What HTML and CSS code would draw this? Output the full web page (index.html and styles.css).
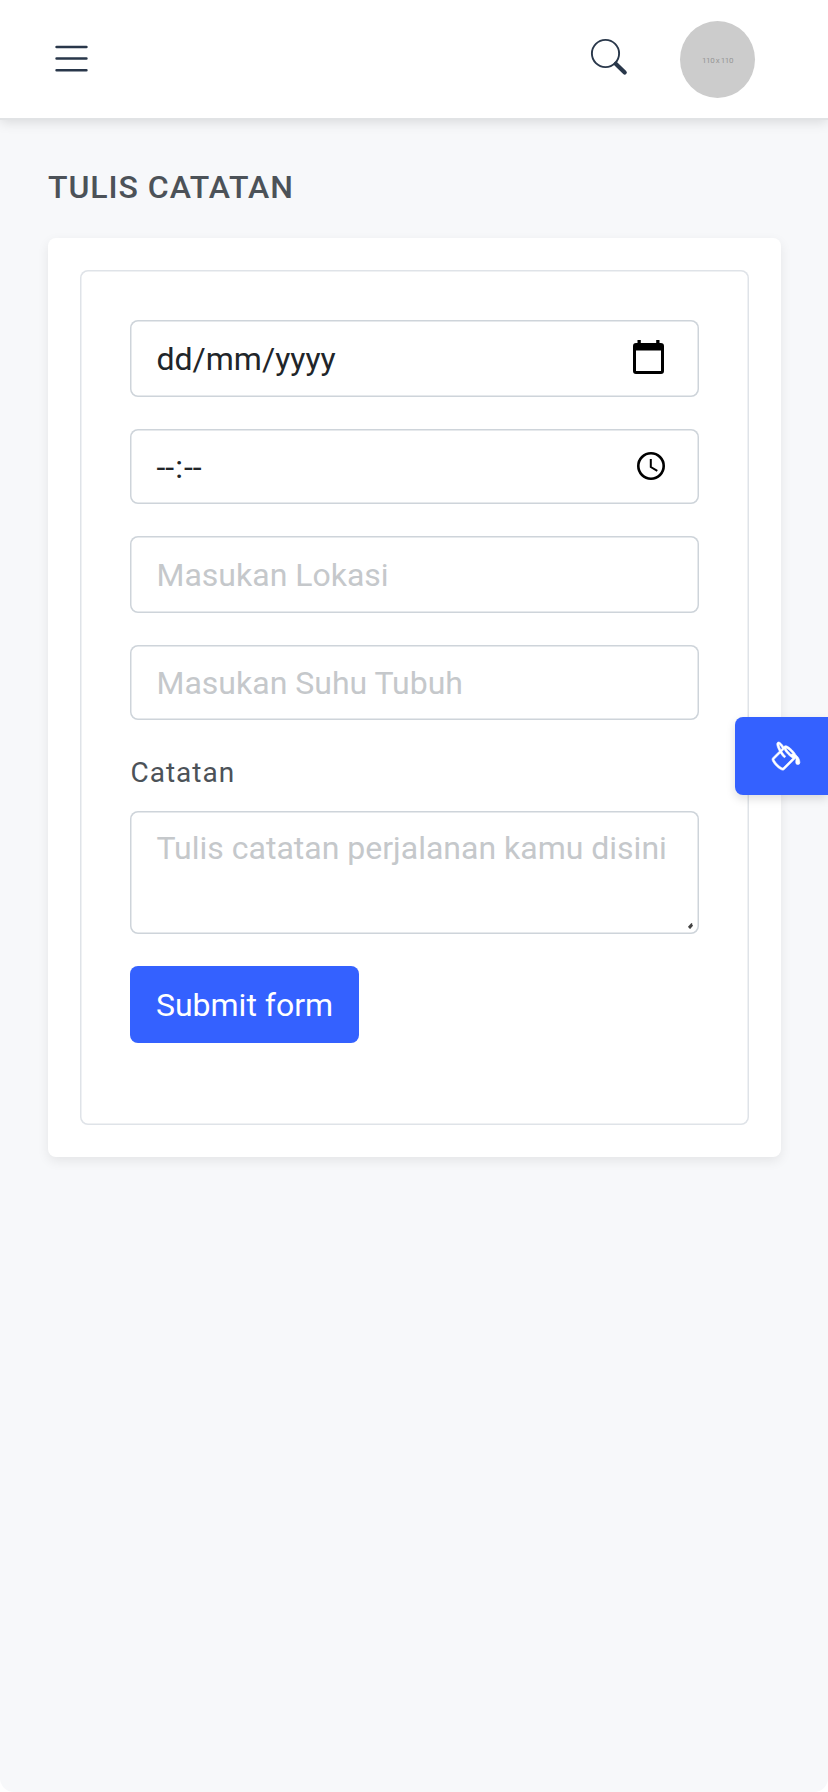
FILE: index.html
```html
<!DOCTYPE html>
<html lang="id">
<head>
<meta charset="utf-8">
<title>Tulis Catatan</title>
<link rel="stylesheet" href="styles.css">
</head>
<body>
<div class="page">
  <header class="topbar">
    <svg class="menu" viewBox="0 0 34 28" fill="none" stroke="#29374a" stroke-width="2.6" stroke-linecap="round"><path d="M1.6 2h29.8M1.6 13.5h29.8M1.6 25.3h29.8"/></svg>
    <svg class="search" viewBox="0 0 38 38" fill="none" stroke="#29374a"><circle cx="15.5" cy="15.5" r="13.6" stroke-width="1.9"/><path d="M25.7 25.7l9 8.8" stroke-width="4.2" stroke-linecap="round"/></svg>
    <div class="avatar">110 x 110</div>
  </header>
  <main class="content">
    <h1 class="title">TULIS CATATAN</h1>
    <section class="card">
      <form class="form">
        <div class="field tall dark"><span>dd/mm/yyyy</span>
          <svg class="calendar" viewBox="0 0 31 34"><path fill-rule="evenodd" d="M4.5 0h3.3v3h15.4V0h3.3v3h1.3Q31 3 31 6v25q0 3-3 3H3q-3 0-3-3V6q0-3 3-3h1.500zM3 10.600v20.400h25V10.600z"/></svg>
        </div>
        <div class="field dark"><span>--<span class="colon">:</span>--</span>
          <svg class="clock" viewBox="0 0 28 28" fill="none" stroke="#000"><circle cx="14" cy="14" r="12.700" stroke-width="2.600"/><path d="M13.800 7v8l6.500 3.900" stroke-width="2"/></svg>
        </div>
        <div class="field tall"><span>Masukan Lokasi</span></div>
        <div class="field"><span>Masukan Suhu Tubuh</span></div>
        <div class="label">Catatan</div>
        <div class="field area"><span>Tulis catatan perjalanan kamu disini</span>
          <svg class="grip" viewBox="0 0 5 6" stroke="#444" stroke-width="1.600"><path d="M.5 4.500l3.500-4M1.500 5.500l3-3.500"/></svg>
        </div>
        <button class="submit" type="button">Submit form</button>
      </form>
    </section>
  </main>
  <div class="switcher">
    <svg viewBox="0 0 16 16" fill="#fff" stroke="#fff" stroke-width=".3"><path d="M6.192 2.78c-.458-.677-.927-1.248-1.350-1.643a2.972 2.972 0 0 0-.71-.515c-.217-.104-.56-.205-.882-.02-.367.213-.427.63-.43.896-.003.304.064.664.173 1.044.196.687.556 1.528 1.035 2.402L.752 8.220c-.277.277-.269.656-.218.918.055.283.187.593.36.903.348.627.92 1.361 1.626 2.068.707.707 1.441 1.278 2.068 1.626.31.173.62.305.903.36.262.05.64.059.918-.218l5.615-5.615c.118.257.092.512.05.939-.03.292-.068.665-.073 1.176v.123h.003a1 1 0 0 0 1.993 0H14v-.057a1.010 1.010 0 0 0-.004-.117c-.055-1.250-.7-2.738-1.860-3.494a4.322 4.322 0 0 0-.211-.434c-.349-.626-.92-1.360-1.627-2.067-.707-.707-1.441-1.279-2.068-1.627-.31-.172-.62-.304-.903-.36-.262-.05-.64-.058-.918.219l-.217.216zM4.160 1.867c.381.356.844.922 1.311 1.632l-.704.705c-.382-.727-.66-1.402-.813-1.938a3.283 3.283 0 0 1-.131-.673c.091.061.204.15.337.274zm.394 3.965c.54.852 1.107 1.567 1.607 2.033a.5.5 0 1 0 .682-.732c-.453-.422-1.017-1.136-1.564-2.027l1.088-1.088c.054.12.115.243.183.365.349.627.92 1.361 1.627 2.068.706.707 1.440 1.278 2.068 1.626.122.068.244.13.365.183l-4.861 4.862a.571.571 0 0 1-.068-.01c-.137-.027-.342-.104-.608-.252-.524-.292-1.186-.8-1.846-1.460-.66-.66-1.168-1.320-1.460-1.846-.147-.265-.225-.47-.251-.607a.573.573 0 0 1-.01-.068l3.048-3.047zm2.870-1.935a2.440 2.440 0 0 1-.241-.561c.135.033.324.11.562.241.524.292 1.186.8 1.846 1.460.45.45.83.901 1.118 1.310a3.497 3.497 0 0 0-1.066.091 11.270 11.270 0 0 1-.76-.694c-.66-.66-1.167-1.322-1.458-1.847z"/></svg>
  </div>
</div>
</body>
</html>
```

FILE: styles.css
```css
* { box-sizing: border-box; }
html { background: #fff; }
body { margin: 0; font-family: Roboto, "Liberation Sans", sans-serif; font-size: 32px; color: #212529; }
svg { display: block; flex: none; }
.page { position: relative; height: 1792px; background: #f7f8fa; border-radius: 0 0 14px 14px; overflow: hidden; }
.topbar { display: flex; height: 118px; padding: 0 73px 0 55px; background: #fff; box-shadow: 0 2px 0 #e1e3e5, 0 4px 12px rgba(0, 0, 0, .13); }
.menu { width: 34px; height: 28px; margin-top: 45px; }
.search { width: 38px; height: 38px; margin: 38px 0 0 auto; }
.avatar { display: flex; align-items: center; justify-content: center; width: 75px; height: 77px; margin: 21px 0 0 52px; padding-top: 1px; border-radius: 50%; background: #ccc; color: #969696; font-size: 8px; letter-spacing: -.45px; white-space: nowrap; }
.content { padding: 48px 47px 0 48px; }
.title { margin: 0; height: 72px; font-size: 32px; line-height: 42px; font-weight: 500; letter-spacing: .95px; color: #4c5258; white-space: nowrap; }
.card { height: 919px; padding: 32px; border-radius: 8px; background: #fff; box-shadow: 0 4px 12px rgba(0, 0, 0, .08); }
.form { height: 855px; padding: 50px 50px 0 49.5px; border-radius: 8px; box-shadow: inset 0 0 0 1.5px #dfe3e8; }
.field { display: flex; align-items: center; justify-content: space-between; height: 75px; margin-bottom: 32.5px; padding: 2px 34px 0 27px; border-radius: 8px; box-shadow: inset 0 0 0 1.5px #ced4da; color: #c5c8cb; line-height: 48px; white-space: nowrap; }
.tall { height: 76.5px; margin-bottom: 32px; }
.dark { color: #212529; }
.colon { margin: 0 1px; }
.calendar { width: 31px; height: 34px; margin: -4px 1px 0 0; }
.clock { width: 28px; height: 28px; margin-top: -2px; }
.label { height: 58.5px; padding-left: 1px; line-height: 42px; font-size: 28px; letter-spacing: 1px; color: #4c5258; }
.area { position: relative; align-items: flex-start; height: 123px; padding-top: 13px; margin-bottom: 32px; }
.grip { position: absolute; right: 6px; bottom: 5px; width: 5px; height: 6px; }
.submit { display: block; width: 229px; height: 77px; padding: 2px 0 0 1px; border: 0; border-radius: 8px; background: #3461ff; color: #fff; font: inherit; }
.switcher { position: absolute; right: 0; top: 716.5px; width: 93.5px; height: 78.5px; padding: 24.5px 0 0 36px; border-radius: 8px 0 0 8px; background: #3461ff; box-shadow: 0 4px 10px rgba(0, 0, 0, .13); }
.switcher svg { width: 33px; height: 33px; }
```
